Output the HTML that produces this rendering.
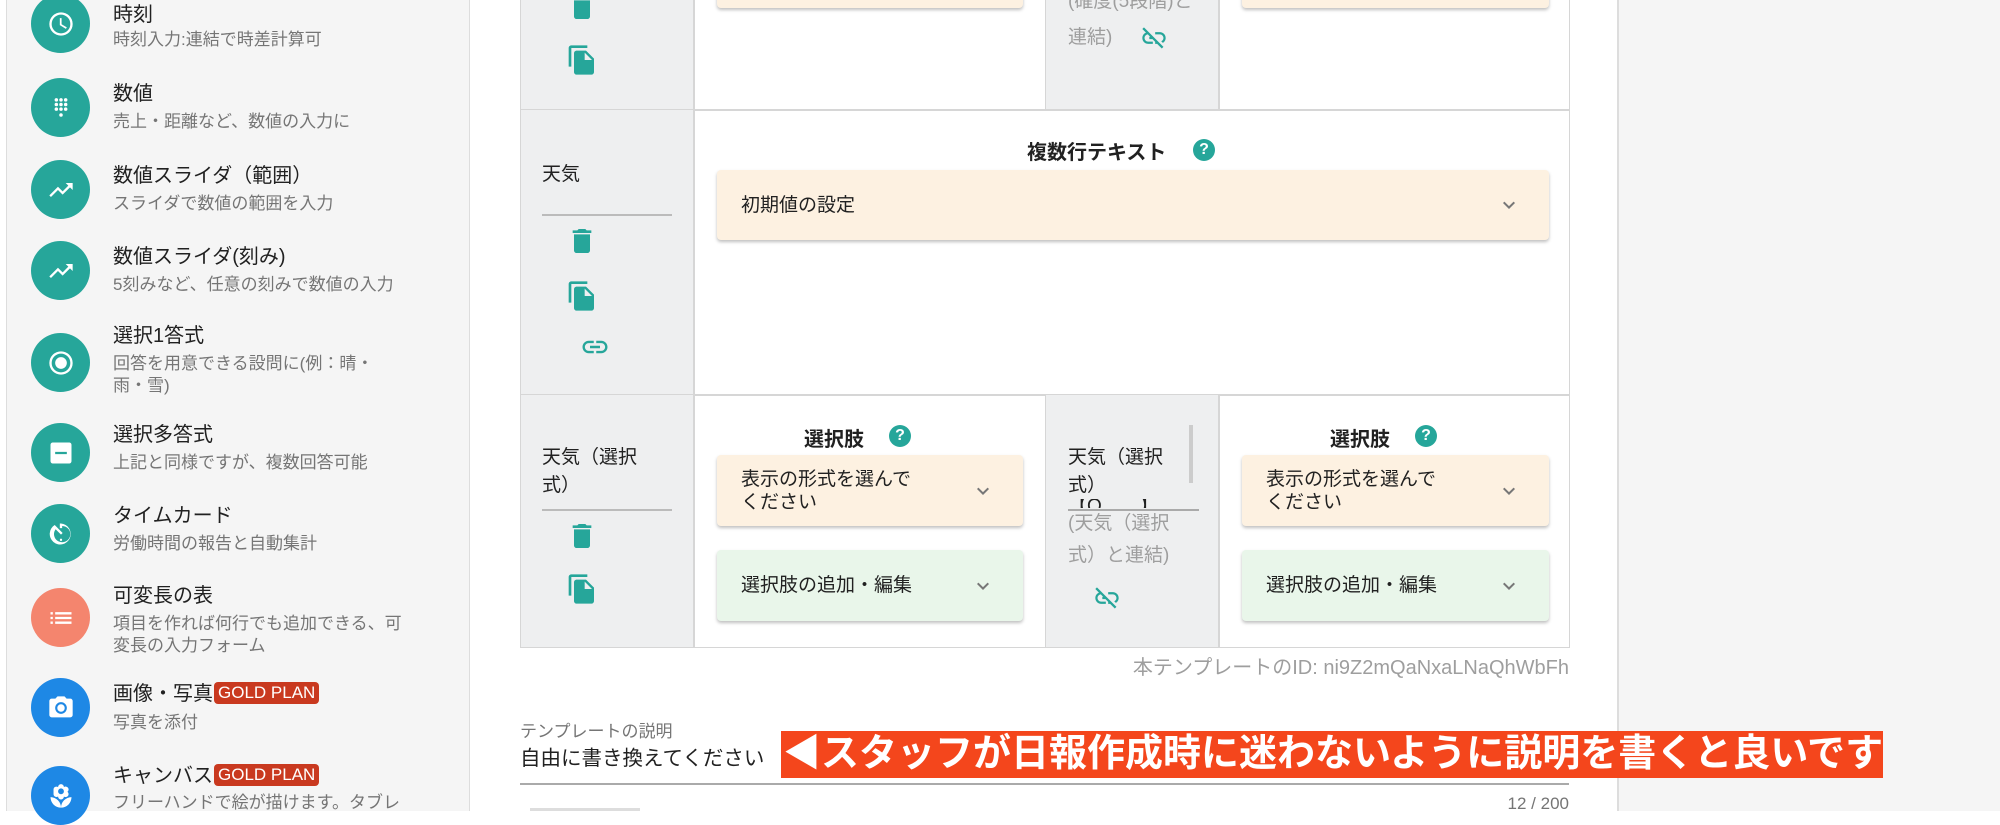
<!DOCTYPE html>
<html><head><meta charset="utf-8"><style>
*{margin:0;padding:0;box-sizing:border-box}
body{width:2000px;height:811px;overflow:hidden;background:#fff;font-family:"Liberation Sans","Noto Sans CJK JP",sans-serif;position:relative;color:#212121}
.a{position:absolute}
#side{left:6px;top:0;width:464px;height:811px;background:#f5f5f5;border-left:1px solid #ddd;border-right:1px solid #ddd}
#right{left:1617px;top:0;width:383px;height:811px;background:#f5f5f5;border-left:2px solid #ddd}
.ic{position:absolute;left:24px;width:59px;height:59px;border-radius:50%;background:#26a69a;display:flex;align-items:center;justify-content:center}
.ic svg{width:28px;height:28px;fill:#fff}
.t{position:absolute;left:106px;font-size:20px;color:#212121;line-height:24px}
.s{position:absolute;left:106px;font-size:17px;color:#757575;line-height:22px;width:340px}
.gold{display:inline-block;background:#c9391f;color:#fff;font-size:17px;border-radius:4px;padding:0 4px;line-height:22px;vertical-align:2px;margin-left:1px}
.g{background:#eeeff0}
.bd{border:1.5px solid #d6d6d6}
.card{position:absolute;border-radius:4px;box-shadow:0 2px 3px rgba(0,0,0,.25);font-size:19px;line-height:23px;padding-left:24px;display:flex;align-items:center}
.o{background:#fdf1e1}.gr{background:#e9f6ea}
.chev{position:absolute;right:28px;top:50%;margin-top:-12px;width:24px;height:24px;fill:#777}
.ti{fill:#26a69a;position:absolute}
.hd{position:absolute;font-size:20px;font-weight:bold}
.help{position:absolute;width:22px;height:22px;border-radius:50%;background:#26a69a;color:#fff;font-size:16px;font-weight:bold;text-align:center;line-height:22px}
.lbl{position:absolute;font-size:19px;line-height:28px}
.ul{position:absolute;height:1.5px;background:#bbb}
</style></head><body>
<div id="side" class="a">
 <div class="ic" style="top:-6px"><svg viewBox="0 0 24 24"><path d="M12 2a10 10 0 1 0 0 20 10 10 0 0 0 0-20zm0 18a8 8 0 1 1 0-16 8 8 0 0 1 0 16zm.5-13H11v6l5.2 3.2.8-1.3-4.5-2.7z"/></svg></div>
 <div class="t" style="top:3px">時刻</div><div class="s" style="top:29px">時刻入力:連結で時差計算可</div>
 <div class="ic" style="top:78px"><svg viewBox="0 0 24 24"><circle cx="8" cy="5" r="1.5"/><circle cx="12" cy="5" r="1.5"/><circle cx="16" cy="5" r="1.5"/><circle cx="8" cy="9" r="1.5"/><circle cx="12" cy="9" r="1.5"/><circle cx="16" cy="9" r="1.5"/><circle cx="8" cy="13" r="1.5"/><circle cx="12" cy="13" r="1.5"/><circle cx="16" cy="13" r="1.5"/><circle cx="12" cy="18" r="1.5"/></svg></div>
 <div class="t" style="top:82px">数値</div><div class="s" style="top:111px">売上・距離など、数値の入力に</div>
 <div class="ic" style="top:160px"><svg viewBox="0 0 24 24"><path d="M16 6l2.3 2.3-4.9 4.9-4-4L2 16.6 3.4 18l6-6 4 4 6.3-6.3L22 12V6z"/></svg></div>
 <div class="t" style="top:164px">数値スライダ（範囲）</div><div class="s" style="top:193px">スライダで数値の範囲を入力</div>
 <div class="ic" style="top:241px"><svg viewBox="0 0 24 24"><path d="M16 6l2.3 2.3-4.9 4.9-4-4L2 16.6 3.4 18l6-6 4 4 6.3-6.3L22 12V6z"/></svg></div>
 <div class="t" style="top:245px">数値スライダ(刻み)</div><div class="s" style="top:274px">5刻みなど、任意の刻みで数値の入力</div>
 <div class="ic" style="top:333px"><svg viewBox="0 0 24 24"><path d="M12 7a5 5 0 1 0 0 10 5 5 0 0 0 0-10zm0-5a10 10 0 1 0 0 20 10 10 0 0 0 0-20zm0 18a8 8 0 1 1 0-16 8 8 0 0 1 0 16z"/></svg></div>
 <div class="t" style="top:324px">選択1答式</div><div class="s" style="top:353px">回答を用意できる設問に(例：晴・<br>雨・雪)</div>
 <div class="ic" style="top:423px"><svg viewBox="0 0 24 24"><path d="M19 3H5a2 2 0 0 0-2 2v14a2 2 0 0 0 2 2h14a2 2 0 0 0 2-2V5a2 2 0 0 0-2-2zm-2 10H7v-2h10v2z"/></svg></div>
 <div class="t" style="top:423px">選択多答式</div><div class="s" style="top:452px">上記と同様ですが、複数回答可能</div>
 <div class="ic" style="top:504px"><svg viewBox="0 0 24 24"><path d="M11 17a1 1 0 1 0 2 0 1 1 0 0 0-2 0zm0-14v4h2V5.1a7 7 0 1 1-5.6 2.8L12 12.5l1.4-1.4-6.8-6.8v.02A9 9 0 1 0 12 3h-1z"/></svg></div>
 <div class="t" style="top:504px">タイムカード</div><div class="s" style="top:533px">労働時間の報告と自動集計</div>
 <div class="ic" style="top:588px;background:#f4856e"><svg viewBox="0 0 24 24"><path d="M3 13h2v-2H3v2zm0 4h2v-2H3v2zm0-8h2V7H3v2zm4 4h14v-2H7v2zm0 4h14v-2H7v2zM7 7v2h14V7H7z"/></svg></div>
 <div class="t" style="top:584px">可変長の表</div><div class="s" style="top:613px">項目を作れば何行でも追加できる、可<br>変長の入力フォーム</div>
 <div class="ic" style="top:678px;background:#1e88e5"><svg viewBox="0 0 24 24"><circle cx="12" cy="12" r="3.2"/><path d="M9 2L7.2 4H4a2 2 0 0 0-2 2v12a2 2 0 0 0 2 2h16a2 2 0 0 0 2-2V6a2 2 0 0 0-2-2h-3.2L15 2H9zm3 15a5 5 0 1 1 0-10 5 5 0 0 1 0 10z"/></svg></div>
 <div class="t" style="top:682px">画像・写真<span class="gold">GOLD PLAN</span></div><div class="s" style="top:712px">写真を添付</div>
 <div class="ic" style="top:766px;background:#1e88e5"><svg viewBox="0 0 24 24"><path d="M12 22a9 9 0 0 0 9-9 9 9 0 0 0-9 9zM5.6 10.3a2.5 2.5 0 0 0 3.9 2.1v.1a2.5 2.5 0 0 0 5 0v-.1a2.5 2.5 0 0 0 3-4 2.5 2.5 0 0 0-3-4v-.1a2.5 2.5 0 0 0-5 0v.1a2.5 2.5 0 0 0-3.9 1.9zM12 5.5a2.5 2.5 0 1 1 0 5 2.5 2.5 0 0 1 0-5zM3 13a9 9 0 0 0 9 9 9 9 0 0 0-9-9z"/></svg></div>
 <div class="t" style="top:764px">キャンバス<span class="gold">GOLD PLAN</span></div><div class="s" style="top:792px">フリーハンドで絵が描けます。タブレ</div>
</div>
<div id="right" class="a"></div>

<div class="a g bd" style="left:520px;top:-10px;width:175px;height:121px"></div>
<div class="a bd" style="left:693px;top:-10px;width:354px;height:121px"></div>
<div class="a g bd" style="left:1045px;top:-10px;width:175px;height:121px"></div>
<div class="a bd" style="left:1218px;top:-10px;width:352px;height:121px"></div>
<div class="a g bd" style="left:520px;top:109px;width:175px;height:287px"></div>
<div class="a bd" style="left:693px;top:109px;width:877px;height:287px"></div>
<div class="a g bd" style="left:520px;top:394px;width:175px;height:254px"></div>
<div class="a bd" style="left:693px;top:394px;width:354px;height:254px"></div>
<div class="a g bd" style="left:1045px;top:394px;width:175px;height:254px"></div>
<div class="a bd" style="left:1218px;top:394px;width:352px;height:254px"></div>

<svg style="display:none"><defs>
<symbol id="del" viewBox="0 0 24 24"><path d="M6 19c0 1.1.9 2 2 2h8c1.1 0 2-.9 2-2V7H6v12zM19 4h-3.5l-1-1h-5l-1 1H5v2h14V4z"/></symbol>
<symbol id="cp" viewBox="0 0 24 24"><path d="M16 1H4c-1.1 0-2 .9-2 2v14h2V3h12V1zm-1 4l6 6v10c0 1.1-.9 2-2 2H7.99C6.89 23 6 22.1 6 21l.01-14c0-1.1.89-2 1.99-2h7zm-1 7h5.5L14 6.5V12z"/></symbol>
<symbol id="lk" viewBox="0 0 24 24"><path d="M3.9 12c0-1.71 1.39-3.1 3.1-3.1h4V7H7c-2.76 0-5 2.24-5 5s2.24 5 5 5h4v-1.9H7c-1.71 0-3.1-1.39-3.1-3.1zM8 13h8v-2H8v2zm9-6h-4v1.9h4c1.71 0 3.1 1.39 3.1 3.1s-1.39 3.1-3.1 3.1h-4V17h4c2.76 0 5-2.24 5-5s-2.24-5-5-5z"/></symbol>
<symbol id="lo" viewBox="0 0 24 24"><path d="M17 7h-4v1.9h4c1.7 0 3.1 1.4 3.1 3.1 0 1.3-.8 2.3-1.9 2.8l1.4 1.4C21 15.3 22 13.8 22 12c0-2.8-2.2-5-5-5zM2 4.3l3.1 3.1C3.3 8.1 2 9.9 2 12c0 2.8 2.2 5 5 5h4v-1.9H7c-1.7 0-3.1-1.4-3.1-3.1 0-1.6 1.2-2.9 2.8-3.1L8.7 11H8v2h2.7l2.3 2.3V17h1.7l4 4 1.4-1.4L3.4 2.9 2 4.3z"/></symbol>
<symbol id="cv" viewBox="0 0 24 24"><path d="M7.41 8.59L12 13.17l4.59-4.58L18 10l-6 6-6-6 1.41-1.41z"/></symbol>
</defs></svg>

<svg class="ti" style="left:566px;top:-9px;width:32px;height:32px"><use href="#del"/></svg>
<svg class="ti" style="left:566px;top:44px;width:32px;height:32px"><use href="#cp"/></svg>
<div class="card o" style="left:717px;top:-40px;width:306px;height:48px"></div>
<div class="card o" style="left:1242px;top:-40px;width:307px;height:48px"></div>
<div class="lbl" style="left:1068px;top:-12px;color:#9e9e9e">(確度(5段階)と</div>
<div class="lbl" style="left:1068px;top:24px;color:#9e9e9e">連結)</div>
<svg class="ti" style="left:1140px;top:24px;width:28px;height:28px"><use href="#lo"/></svg>

<div class="lbl" style="left:542px;top:161px">天気</div>
<div class="ul" style="left:542px;top:214px;width:130px"></div>
<svg class="ti" style="left:566px;top:225px;width:32px;height:32px"><use href="#del"/></svg>
<svg class="ti" style="left:566px;top:280px;width:32px;height:32px"><use href="#cp"/></svg>
<svg class="ti" style="left:580px;top:332px;width:30px;height:30px"><use href="#lk"/></svg>
<div class="hd" style="left:1027px;top:136px">複数行テキスト</div>
<div class="help" style="left:1193px;top:139px">?</div>
<div class="card o" style="left:717px;top:170px;width:832px;height:70px">初期値の設定<svg class="chev"><use href="#cv"/></svg></div>

<div class="lbl" style="left:542px;top:444px">天気（選択<br>式）</div>
<div class="ul" style="left:542px;top:509px;width:130px"></div>
<svg class="ti" style="left:566px;top:520px;width:32px;height:32px"><use href="#del"/></svg>
<svg class="ti" style="left:566px;top:573px;width:32px;height:32px"><use href="#cp"/></svg>
<div class="hd" style="left:804px;top:423px">選択肢</div>
<div class="help" style="left:889px;top:425px">?</div>
<div class="card o" style="left:717px;top:455px;width:306px;height:71px">表示の形式を選んで<br>ください<svg class="chev"><use href="#cv"/></svg></div>
<div class="card gr" style="left:717px;top:550px;width:306px;height:71px">選択肢の追加・編集<svg class="chev"><use href="#cv"/></svg></div>

<div class="lbl" style="left:1068px;top:444px">天気（選択<br>式）</div>
<div class="a" style="left:1189px;top:425px;width:4px;height:58px;background:#ccc"></div>
<div class="a" style="left:1068px;top:499px;width:130px;height:9px;overflow:hidden"><div style="font-size:19px;line-height:20px;margin-top:-2px">【O　　】</div></div>
<div class="ul" style="left:1068px;top:509px;width:131px;background:#aaa"></div>
<div class="lbl" style="left:1068px;top:510px;color:#9e9e9e">(天気（選択</div>
<div class="lbl" style="left:1068px;top:542px;color:#9e9e9e">式）と連結)</div>
<svg class="ti" style="left:1093px;top:584px;width:28px;height:28px"><use href="#lo"/></svg>

<div class="hd" style="left:1330px;top:423px">選択肢</div>
<div class="help" style="left:1415px;top:425px">?</div>
<div class="card o" style="left:1242px;top:455px;width:307px;height:71px">表示の形式を選んで<br>ください<svg class="chev"><use href="#cv"/></svg></div>
<div class="card gr" style="left:1242px;top:550px;width:307px;height:71px">選択肢の追加・編集<svg class="chev"><use href="#cv"/></svg></div>

<div class="a" style="left:1000px;width:569px;text-align:right;top:651px;font-size:20px;color:#9e9e9e">本テンプレートのID: ni9Z2mQaNxaLNaQhWbFh</div>

<div class="a" style="left:520px;top:717px;font-size:17px;color:#757575">テンプレートの説明</div>
<div class="a" style="left:520px;top:741px;font-size:20.5px;color:#212121">自由に書き換えてください</div>
<div class="a" style="left:520px;top:783px;width:1049px;height:1.5px;background:#aaa"></div>
<div class="a" style="left:1400px;width:169px;text-align:right;top:794px;font-size:17px;color:#757575">12 / 200</div>
<div class="a" style="left:530px;top:808px;width:110px;height:3px;background:#ddd"></div>

<div class="a" style="left:781px;top:731px;width:1102px;height:47px;background:#f4461c;color:#fff;font-size:38px;font-weight:bold;line-height:47px;padding-left:2px;white-space:nowrap;overflow:hidden">◀スタッフが日報作成時に迷わないように説明を書くと良いです</div>
</body></html>
